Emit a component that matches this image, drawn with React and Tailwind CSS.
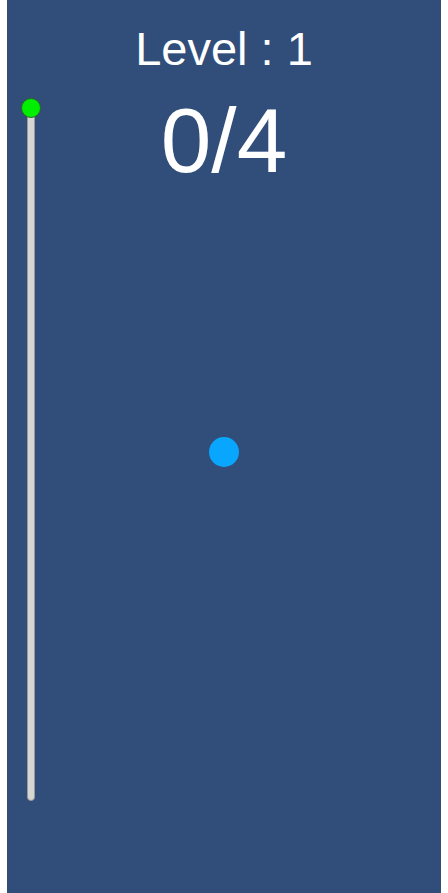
export default function App() {
  return (
    <div className="w-full h-[893px] bg-white px-[7px] flex">
      <div
        className="relative flex-1 bg-[#314d79] text-white flex flex-col items-center"
        style={{ fontFamily: '"Liberation Sans", Arial, sans-serif' }}
      >
        {/* level header */}
        <div className="mt-[25px] text-[47px] leading-none">Level : 1</div>
        <div className="mt-[23px] text-[91px] leading-none">0/4</div>

        {/* progress slider */}
        <div className="absolute left-[20px] top-[108px] w-[8px] h-[693px] rounded-b-full bg-[#d6d6d2] border border-[#9a9a96]" />
        <div className="absolute left-[14px] top-[98px] w-[20px] h-[20px] rounded-full bg-[#00ee00] border border-[#2a6a2a]" />

        {/* player ball */}
        <div className="absolute left-[202px] top-[437px] w-[30px] h-[30px] rounded-full bg-[#08a6ff]" />
      </div>
    </div>
  );
}
